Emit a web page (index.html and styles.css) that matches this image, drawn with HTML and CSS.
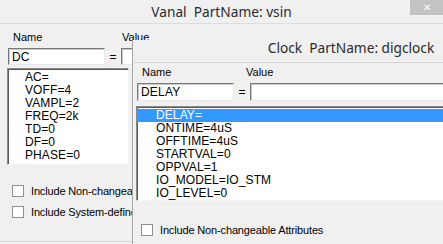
FILE: index.html
```html
<!doctype html>
<html>
<head>
<meta charset="utf-8">
<title>Attributes</title>
<link rel="stylesheet" href="styles.css">
</head>
<body>
<div class="desk">

<div class="win back">
	<div class="titlebar">
		<span></span>
		<span class="title">Vanal&nbsp;&nbsp;PartName: vsin</span>
		<span class="close">&#x2715;</span>
	</div>
	<div class="pane">
		<div class="labels"><span class="lbl-name">Name</span><span>Value</span></div>
		<div class="fields">
			<div class="field fname">DC</div>
			<span class="eq">=</span>
			<div class="field fvalue"></div>
		</div>
		<ul class="list">
			<li>AC=</li>
			<li>VOFF=4</li>
			<li>VAMPL=2</li>
			<li>FREQ=2k</li>
			<li>TD=0</li>
			<li>DF=0</li>
			<li>PHASE=0</li>
		</ul>
		<div class="checks">
			<label class="check"><span class="box"></span>Include Non-changeable Attributes</label>
			<label class="check"><span class="box"></span>Include System-defined Attributes</label>
		</div>
	</div>
</div>

<div class="win front">
	<div class="titlebar">
		<span class="title">Clock&nbsp;&nbsp;PartName: digclock</span>
	</div>
	<div class="pane">
		<div class="labels"><span class="lbl-name">Name</span><span>Value</span></div>
		<div class="fields">
			<div class="field fname">DELAY</div>
			<span class="eq">=</span>
			<div class="field fvalue"></div>
		</div>
		<ul class="list">
			<li class="sel">DELAY=</li>
			<li>ONTIME=4uS</li>
			<li>OFFTIME=4uS</li>
			<li>STARTVAL=0</li>
			<li>OPPVAL=1</li>
			<li>IO_MODEL=IO_STM</li>
			<li>IO_LEVEL=0</li>
		</ul>
		<div class="checks">
			<label class="check"><span class="box"></span>Include Non-changeable Attributes</label>
		</div>
	</div>
</div>

</div>
</body>
</html>
```

FILE: styles.css
```css
body{ margin:0; background-color:#f0f0f0; font-family:"Liberation Sans", Arial, sans-serif; font-size:11px; color:#000;}
ul{ margin:0; padding:0; list-style:none;}

.desk{
	position:relative;
	width:443px;
	height:244px;
	overflow:hidden;
}

.win{ background-color:#f0f0f0;}
.back{ height:241px; border-bottom:1px solid #d8d8d8;}

.titlebar{
	display:grid;
	grid-template-columns:1fr auto 1fr;
	height:23px;
	border-bottom:1px solid #dcdcdc;
}
.title{
	font-family:"Noto Sans", "Open Sans", sans-serif;
	font-size:13.7px;
	color:#2b2b2b;
	padding-top:2px;
}
.close{
	justify-self:end;
	align-self:start;
	width:33px;
	height:15px;
	background-color:#c3c3c3;
	color:#fff;
	font-size:10px;
	text-align:center;
	line-height:15px;
}

.back .pane{ padding:7px 0 0 7px;}
.labels{ display:flex; height:12px; line-height:12px;}
.lbl-name{ width:109px; padding-left:6px;}
.fields{ display:flex; align-items:center; margin-top:5px;}
.field{
	height:15px;
	background-color:#fff;
	border:1px solid;
	border-color:#7a7a7a #e8e8e8 #e8e8e8 #7a7a7a;
	box-shadow:inset 1px 1px 0 #c8c8c8;
	padding-left:3px;
	line-height:16px;
	font-size:12px;
	letter-spacing:.2px;
}
.fname{ width:92px; margin-left:1px;}
.eq{ width:16px; text-align:center; font-size:12px;}
.fvalue{ width:300px;}

.list{
	background-color:#fff;
	border:1px solid;
	border-color:#8a8a8a #f4f4f4 #f4f4f4 #8a8a8a;
	box-shadow:inset 1px 1px 0 #5a5a5a;
	font-size:12px;
	letter-spacing:.1px;
	line-height:13px;
	padding-top:2px;
}
.back .list{ width:122px; height:97px; margin-top:3px; padding-left:17px; box-sizing:border-box;}

.checks{ display:flex; flex-direction:column; gap:9px;}
.back .checks{ margin-top:20px; padding-left:5px;}
.check{ display:flex; align-items:center; gap:7px; height:12px; letter-spacing:-.15px;}
.box{
	width:10px;
	height:10px;
	background-color:#fff;
	border:1px solid #8f8f8f;
}

/* front window */
.front{
	position:absolute;
	left:132px;
	top:40px;
	width:436px;
	height:210px;
	border-left:1px solid #a8a8a8;
}
.front .titlebar{ display:flex; justify-content:center; height:22px; border-bottom:1px solid #d6d6d6;}
.front .title{ padding-top:0; font-size:13.7px; line-height:16px;}
.front .pane{ padding:3px 0 0 3px;}
.front .lbl-name{ width:104px;}
.front .fields{ margin-top:5px;}
.front .fname{ width:92px; margin-left:1px; height:16px;}
.front .fvalue{ height:16px;}
.front .list{ height:95px; margin-top:5px; box-sizing:border-box; padding:2px 0 0 0;}
.front .list li{ padding-left:19px;}
.front .list li.sel{ background-color:#3399ff; color:#fff;}
.front .checks{ margin-top:23px; padding-left:5px;}
```
